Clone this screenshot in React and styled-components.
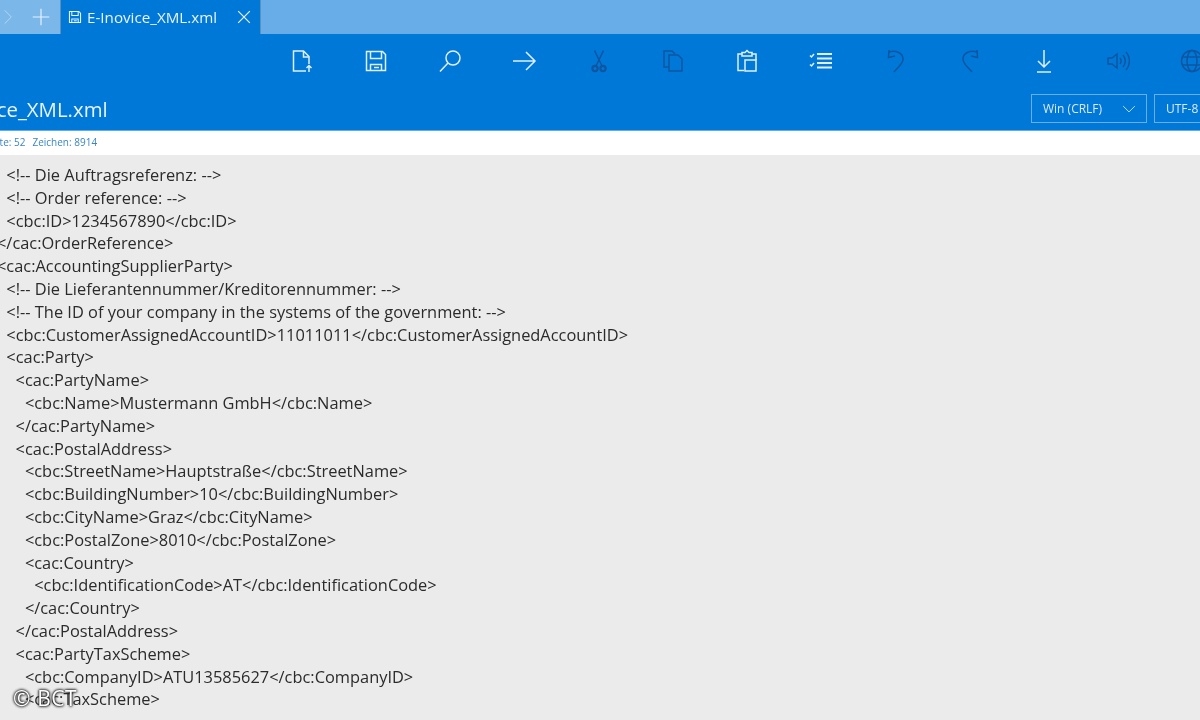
import styled, { createGlobalStyle } from "styled-components";

const GlobalStyle = createGlobalStyle`
  html, body {
    margin: 0;
    padding: 0;
    height: 720px;
    overflow: hidden;
    background: #ebebeb;
  }
  * { box-sizing: border-box; }
`;

const Page = styled.div`
  position: relative;
  width: 1200px;
  height: 720px;
  overflow: hidden;
  display: flex;
  flex-direction: column;
  font-family: "Open Sans", "Noto Sans", sans-serif;
  filter: blur(0.35px);
`;

const TabStrip = styled.div`
  height: 34px;
  display: flex;
  background: #68ade8;
`;

const StripButtons = styled.div`
  width: 60px;
  display: flex;
  align-items: center;
  gap: 11px;
  background: #7cb7ea;
`;

const StripButton = styled.div`
  display: flex;
  align-items: center;
  justify-content: center;
  width: ${(p) => p.$w}px;
  color: ${(p) => (p.$dim ? "#b5d6f3" : "#e6f1fb")};
`;

const Tab = styled.div`
  width: 201px;
  display: flex;
  align-items: center;
  background: #0078d7;
  color: #e8f3fc;
  padding-left: 7px;
  border-right: 1px solid #5c8fbd;
  border-left: 1px solid #5c8fbd;
`;

const TabName = styled.span`
  margin-left: 5px;
  font-size: 15.2px;
  white-space: nowrap;
  flex: 1;
`;

const TabClose = styled.div`
  display: flex;
  margin-right: 9px;
`;

const Header = styled.div`
  height: 97px;
  background: #0078d7;
  border-bottom: 1px solid #5eacea;
  display: flex;
  flex-direction: column;
`;

const Toolbar = styled.div`
  height: 53px;
  display: flex;
  padding-left: 265px;
  flex-shrink: 0;
`;

const ToolButton = styled.div`
  width: 74.2px;
  flex-shrink: 0;
  display: flex;
  align-items: center;
  justify-content: center;
  color: ${(p) => (p.$disabled ? "#0f55a0" : "#e0effb")};
`;

const TitleRow = styled.div`
  flex: 1;
  display: flex;
  align-items: flex-start;
  overflow: hidden;
`;

const FileTitle = styled.div`
  margin-left: -67px;
  margin-top: 8px;
  font-size: 20.4px;
  line-height: 28px;
  color: #e8f3fc;
  white-space: nowrap;
  flex: 1;
`;

const Selects = styled.div`
  display: flex;
  gap: 7px;
  margin-top: 7px;
  margin-right: -60px;
`;

const Select = styled.div`
  width: ${(p) => p.$w}px;
  height: 29px;
  border: 1px solid #69aee6;
  color: #d8eafa;
  font-size: 12px;
  display: flex;
  align-items: center;
  justify-content: space-between;
  padding: 0 10px 0 11px;
`;

const StatusBar = styled.div`
  height: 24px;
  background: #fff;
  display: flex;
  align-items: center;
  gap: 7px;
  font-size: 10px;
  padding-bottom: 2px;
  color: #3a86c4;
  white-space: nowrap;
  overflow: hidden;
`;

const StatusItem = styled.span`
  margin-left: ${(p) => p.$offset || 0}px;
`;

const Editor = styled.div`
  flex: 1;
  background: #ebebeb;
  padding-top: 9px;
  margin-left: -3px;
  font-size: 16.4px;
  line-height: 22.8px;
  color: #2b2b2b;
  overflow: hidden;
`;

const CodeLine = styled.div`
  padding-left: ${(p) => p.$level * 9.3}px;
  white-space: pre;
`;

const Watermark = styled.div`
  position: absolute;
  left: 13px;
  top: 685px;
  font-size: 21px;
  line-height: 26px;
  letter-spacing: 0.6px;
  color: #fff;
  text-shadow: 0 0 3px #222, 0 0 3px #222, 0 0 2px #222;
`;

const Icon = ({ children, size = 24, sw = 1.5 }) => (
  <svg
    width={size}
    height={size}
    viewBox="0 0 24 24"
    fill="none"
    stroke="currentColor"
    strokeWidth={sw}
  >
    {children}
  </svg>
);

const SaveGlyph = () => (
  <>
    <path d="M2.500 2.500h16l3 3v16h-19z" />
    <path d="M6.500 2.500v7h11v-7" />
    <path d="M6.500 21.500v-6h11v6" />
    <path d="M10 18.500h5" />
  </>
);

const tools = [
  {
    id: "new",
    icon: (
      <>
        <path d="M16 22H3.500V2h10l5.500 5.500V15" />
        <path d="M13.500 2v6H19" />
        <path d="M19 23v-6M16.500 19l2.500-2.500 2.500 2.500" />
      </>
    ),
  },
  { id: "save", icon: <SaveGlyph /> },
  {
    id: "find",
    icon: (
      <>
        <circle cx="15" cy="9" r="7" />
        <path d="M10 14 2 22.500" />
      </>
    ),
  },
  {
    id: "goto",
    icon: <path d="M0 12h22M13 3l9 9-9 9" />,
  },
  {
    id: "cut",
    disabled: true,
    icon: (
      <>
        <circle cx="8" cy="19.500" r="2.600" strokeWidth="2.200" />
        <circle cx="16" cy="19.500" r="2.600" strokeWidth="2.200" />
        <path d="M9 17 16.500 1.500M15 17 7.500 1.500" />
      </>
    ),
  },
  {
    id: "copy",
    disabled: true,
    icon: (
      <>
        <path d="M8 18H3V2h8l3 3" />
        <path d="M8 6h9l4 4v12H8z" />
      </>
    ),
  },
  {
    id: "paste",
    icon: (
      <>
        <path d="M9 21.500H3V5h4M17 5h4v6" />
        <path d="M7 7V3.500h3L12 1.500l2 2h3V7z" />
        <path d="M10 11h11v11H10z" />
      </>
    ),
  },
  {
    id: "tasks",
    icon: (
      <>
        <path d="M1 6.500 2.500 8 5 5M1 15.500 2.500 17 5 14" />
        <path d="M8 5h15M8 9.500h15M8 14h15M8 18.500h15" strokeWidth="2" />
      </>
    ),
  },
  {
    id: "undo",
    disabled: true,
    icon: (
      <>
        <path d="M5 3c7-2 14 1 14 7 0 5-5 8-9 13" />
        <path d="M5 1 4.500 8.500 11 7" />
      </>
    ),
  },
  {
    id: "redo",
    disabled: true,
    icon: (
      <>
        <path d="M19 3c-7-2-14 1-14 7 0 5 5 8 9 13" />
        <path d="M19 1l.5 7.500L13 7" />
      </>
    ),
  },
  {
    id: "download",
    icon: <path d="M12 1v17M6 12l6 6 6-6M5 23h14" />,
  },
  {
    id: "speak",
    disabled: true,
    icon: (
      <>
        <path d="M2 9h4l5-4v14l-5-4H2z" />
        <path d="M14 9c1.500 2 1.500 4 0 6M17 6c3 3.500 3 8.500 0 12M20 3c4.500 5 4.500 13 0 18" />
      </>
    ),
  },
  {
    id: "translate",
    disabled: true,
    icon: (
      <>
        <circle cx="12" cy="12" r="10.500" />
        <ellipse cx="12" cy="12" rx="5" ry="10.500" />
        <path d="M2 8h20M2 16h20" />
      </>
    ),
  },
];

const codeLines = [
  [1, "<!-- Die Auftragsreferenz: -->"],
  [1, "<!-- Order reference: -->"],
  [1, "<cbc:ID>1234567890</cbc:ID>"],
  [0, "</cac:OrderReference>"],
  [0, "<cac:AccountingSupplierParty>"],
  [1, "<!-- Die Lieferantennummer/Kreditorennummer: -->"],
  [1, "<!-- The ID of your company in the systems of the government: -->"],
  [1, "<cbc:CustomerAssignedAccountID>11011011</cbc:CustomerAssignedAccountID>"],
  [1, "<cac:Party>"],
  [2, "<cac:PartyName>"],
  [3, "<cbc:Name>Mustermann GmbH</cbc:Name>"],
  [2, "</cac:PartyName>"],
  [2, "<cac:PostalAddress>"],
  [3, "<cbc:StreetName>Hauptstraße</cbc:StreetName>"],
  [3, "<cbc:BuildingNumber>10</cbc:BuildingNumber>"],
  [3, "<cbc:CityName>Graz</cbc:CityName>"],
  [3, "<cbc:PostalZone>8010</cbc:PostalZone>"],
  [3, "<cac:Country>"],
  [4, "<cbc:IdentificationCode>AT</cbc:IdentificationCode>"],
  [3, "</cac:Country>"],
  [2, "</cac:PostalAddress>"],
  [2, "<cac:PartyTaxScheme>"],
  [3, "<cbc:CompanyID>ATU13585627</cbc:CompanyID>"],
  [3, "<cac:TaxScheme>"],
];

export default function App() {
  return (
    <Page>
      <GlobalStyle />
      <TabStrip>
        <StripButtons>
          <StripButton $w={16} $dim>
            <Icon size={16}>
              <path d="M7 2l10 10L7 22" />
            </Icon>
          </StripButton>
          <StripButton $w={28}>
            <Icon size={18} sw={1.6}>
              <path d="M12 1v22M1 12h22" />
            </Icon>
          </StripButton>
        </StripButtons>
        <Tab>
          <Icon size={14} sw={1.8}>
            <SaveGlyph />
          </Icon>
          <TabName>E-Inovice_XML.xml</TabName>
          <TabClose>
            <Icon size={14} sw={2}>
              <path d="M2 2l20 20M22 2 2 22" />
            </Icon>
          </TabClose>
        </Tab>
      </TabStrip>
      <Header>
        <Toolbar>
          {tools.map((t) => (
            <ToolButton key={t.id} $disabled={t.disabled}>
              <Icon>{t.icon}</Icon>
            </ToolButton>
          ))}
        </Toolbar>
        <TitleRow>
          <FileTitle>E-Inovice_XML.xml</FileTitle>
          <Selects>
            <Select $w={116}>
              Win (CRLF)
              <Icon size={14}>
                <path d="M2 7l10 10L22 7" />
              </Icon>
            </Select>
            <Select $w={106}>UTF-8</Select>
          </Selects>
        </TitleRow>
      </Header>
      <StatusBar>
        <StatusItem $offset={-14}>Seite: 52</StatusItem>
        <StatusItem>Zeichen: 8914</StatusItem>
      </StatusBar>
      <Editor>
        {codeLines.map(([level, text], i) => (
          <CodeLine key={i} $level={level}>
            {text}
          </CodeLine>
        ))}
      </Editor>
      <Watermark>© BCT</Watermark>
    </Page>
  );
}
